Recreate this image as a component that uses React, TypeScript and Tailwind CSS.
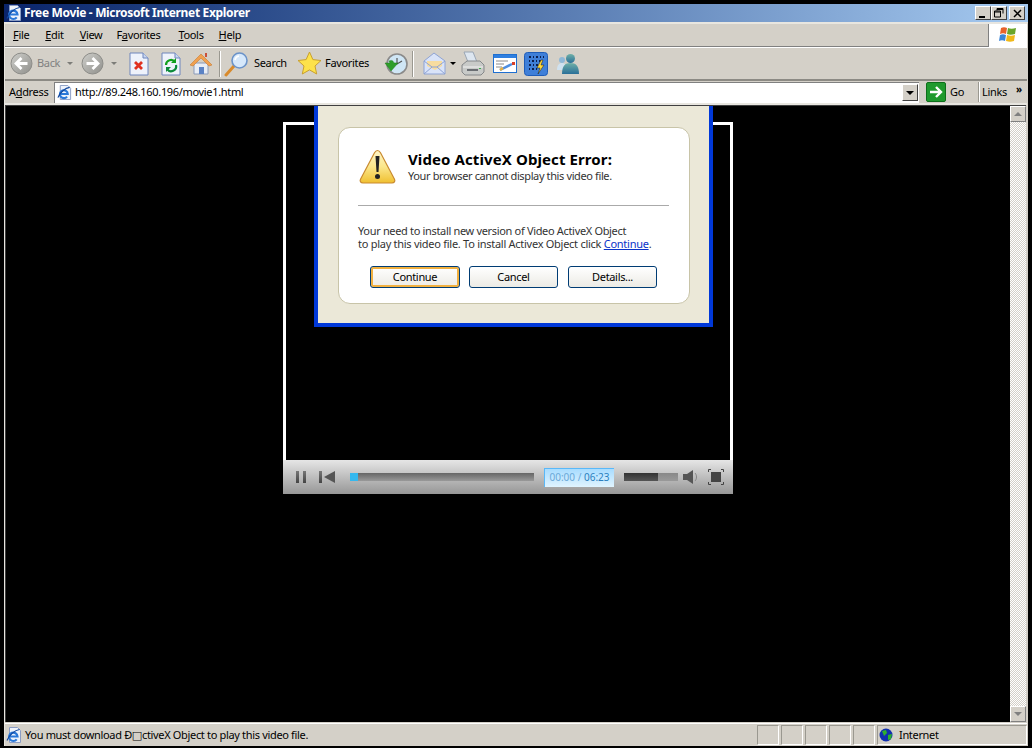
import React from "react";

const ui = "font-['Noto_Sans','DejaVu_Sans',sans-serif] tracking-[-0.33px]";

function Ie({ s = 16 }: { s?: number }) {
  return (
    <svg width={s} height={s} viewBox="0 0 16 16" className="shrink-0">
      <path d="M3.500 .5h8l3 3v12h-11z" fill="#eef3fb" stroke="#8a9cc4" />
      <path d="M3 9.500h8.500a4.200 4.200 0 1 0-.8 2.800" fill="none" stroke="#2a78d8" strokeWidth="2.200" />
      <path d="M1 13.500C3 8 9 3 13.500 2.500" stroke="#12479c" strokeWidth="1.200" fill="none" />
    </svg>
  );
}

function NavCircle({ dir }: { dir: "l" | "r" }) {
  return (
    <svg width="23" height="23" viewBox="0 0 23 23" className="shrink-0">
      <defs>
        <linearGradient id={"nc" + dir} x1="0" y1="0" x2="1" y2="1">
          <stop offset="0" stopColor="#cfcfcb" />
          <stop offset="1" stopColor="#8f8f8b" />
        </linearGradient>
      </defs>
      <circle cx="11.500" cy="11.500" r="10.500" fill={"url(#nc" + dir + ")"} stroke="#8c8c88" />
      {dir === "l" ? (
        <path d="M17.500 11.500H7M11.500 6l-5.500 5.500 5.500 5.500" stroke="#fff" strokeWidth="2.800" fill="none" />
      ) : (
        <path d="M5.500 11.500H16M11.500 6l5.500 5.500-5.500 5.500" stroke="#fff" strokeWidth="2.800" fill="none" />
      )}
    </svg>
  );
}

function Caret({ c = "#7c7c78" }: { c?: string }) {
  return <div className="w-0 h-0 border-x-[3px] border-x-transparent border-t-[3px] shrink-0" style={{ borderTopColor: c }} />;
}

function Page({ kind }: { kind: "stop" | "refresh" }) {
  return (
    <svg width="20" height="24" viewBox="0 0 20 24" className="shrink-0">
      <path d="M1 1h13l5 5v17H1z" fill="#eef2fb" stroke="#6f86bd" />
      <path d="M14 1v5h5" fill="#c9d6ef" stroke="#6f86bd" />
      {kind === "stop" ? (
        <path d="M6 10l7 7M13 10l-7 7" stroke="#e0301e" strokeWidth="2.800" />
      ) : (
        <g fill="none" strokeWidth="2.200">
          <path d="M5 13a5 5 0 0 1 9-3" stroke="#12a01e" />
          <path d="M15 13a5 5 0 0 1-9 4" stroke="#0b8a3a" />
          <path d="M15 6v5h-5z" fill="#12a01e" stroke="none" />
          <path d="M5 20v-5h5z" fill="#0b8a3a" stroke="none" />
        </g>
      )}
    </svg>
  );
}

function Home() {
  return (
    <svg width="24" height="24" viewBox="0 0 24 24" className="shrink-0">
      <path d="M5 11v11h14V11z" fill="#e8edf6" stroke="#8b9ab8" />
      <path d="M1 13L12 2l11 11-3 1-8-8-8 8z" fill="#f0a050" stroke="#c87a30" strokeWidth=".6" />
      <rect x="10" y="15" width="5" height="7" fill="#5b82c4" />
      <rect x="16" y="1" width="2" height="4" fill="#c9503a" />
    </svg>
  );
}

function SearchIcon() {
  return (
    <svg width="25" height="26" viewBox="0 0 25 26" className="shrink-0">
      <path d="M2 24l8-9" stroke="#d98a2b" strokeWidth="3" strokeLinecap="round" />
      <circle cx="15.500" cy="9.500" r="7.500" fill="#d6e8fb" stroke="#6b93c9" strokeWidth="1.600" />
      <path d="M11 9a5 5 0 0 1 4-4" stroke="#fff" strokeWidth="1.500" fill="none" />
    </svg>
  );
}

function Star() {
  return (
    <svg width="25" height="25" viewBox="0 0 25 25" className="shrink-0">
      <path d="M12.500 1l3.400 7.600 8.100.9-6 5.500 1.700 8-7.200-4.100L5.300 23l1.700-8-6-5.500 8.100-.9z" fill="#fde24a" stroke="#c9a030" />
    </svg>
  );
}

function History() {
  return (
    <svg width="24" height="24" viewBox="0 0 24 24" className="shrink-0">
      <circle cx="13" cy="12" r="10" fill="#cfe6f5" stroke="#8a8a8a" strokeWidth="1.600" />
      <path d="M13 6v6l5-3" stroke="#555" strokeWidth="1.200" fill="none" />
      <path d="M1 11l6 8 7-8-4 0C9 8 7 8 5 9L6 11z" fill="#2f9e2a" stroke="#1d7a1b" strokeWidth=".5" />
    </svg>
  );
}

function Mail() {
  return (
    <svg width="23" height="24" viewBox="0 0 23 24" className="shrink-0">
      <path d="M1 9L11 1l11 8v13H1z" fill="#d9e3f8" stroke="#8ea3d4" />
      <path d="M4 9h15v5l-7 4-8-4z" fill="#f7dca0" />
      <path d="M1 22l8-7h5l8 7M1 9l8 6M22 9l-8 6" stroke="#8ea3d4" fill="none" />
    </svg>
  );
}

function Printer() {
  return (
    <svg width="24" height="25" viewBox="0 0 24 25" className="shrink-0">
      <path d="M3 1h9l4 10H7z" fill="#dde6f0" stroke="#9aa6b4" />
      <path d="M1 14l5-4h13l4 4v7l-3 3H4l-3-3z" fill="#c8cac8" stroke="#85888a" />
      <path d="M2 16h20" stroke="#f2f2f2" />
      <path d="M6 19h11" stroke="#6a6e72" strokeWidth="2" />
      <rect x="18" y="17" width="2" height="1" fill="#3bb04a" />
    </svg>
  );
}

function EditIcon() {
  return (
    <svg width="24" height="20" viewBox="0 0 24 20" className="shrink-0">
      <rect x=".5" y=".5" width="23" height="18" fill="#fff" stroke="#1f6fd0" />
      <rect x="1" y="1" width="22" height="3" fill="#2f7fe0" />
      <path d="M3 7h12M3 10h8M3 13h6" stroke="#8a8a8a" />
      <path d="M7 16l12-6" stroke="#4f8fe0" strokeWidth="2.500" />
      <path d="M7 16l3-2" stroke="#e8b040" strokeWidth="2.500" />
      <rect x="19" y="8" width="3" height="3" fill="#d8402a" />
    </svg>
  );
}

function BlueTool() {
  return (
    <svg width="24" height="24" viewBox="0 0 24 24" className="shrink-0">
      <rect x=".5" y=".5" width="23" height="23" rx="3" fill="#3f7fd8" stroke="#1e5cb8" />
      <g fill="#0c1f4f">
        <path d="M5 4h2v2H5zM9 4h1v2H9zM12 4h2v2h-2zM16 4h1v2h-1zM19 4h1v2h-1zM5 8h1v2H5zM8 8h2v2H8zM12 8h1v2h-1zM15 8h2v2h-2zM5 12h2v2H5zM9 12h1v2H9zM12 12h2v2h-2zM5 16h1v2H5zM8 16h2v2H8zM12 16h1v2h-1z" />
      </g>
      <path d="M17 8l-4 8h3l-2 6 6-9h-3l2-5z" fill="#ffd83a" stroke="#1a1a1a" strokeWidth=".5" />
    </svg>
  );
}

function Messenger() {
  return (
    <svg width="24" height="22" viewBox="0 0 24 22" className="shrink-0">
      <defs>
        <linearGradient id="mg" x1="0" y1="0" x2="0" y2="1">
          <stop offset="0" stopColor="#6fb0a8" />
          <stop offset="1" stopColor="#2a6f98" />
        </linearGradient>
      </defs>
      <circle cx="6" cy="7" r="3" fill="#8fb8d8" />
      <path d="M1 17c0-5 2-7 5-7s5 2 5 7z" fill="#d0e2f0" />
      <circle cx="14.500" cy="5.500" r="4.500" fill="url(#mg)" />
      <path d="M6 21c0-8 3-11 8.500-11S23 13 23 21z" fill="url(#mg)" />
    </svg>
  );
}

function Chrome({ children }: { children: React.ReactNode }) {
  return (
    <div className="w-4 h-[14px] bg-[#d4d0c8] border border-t-white border-l-white border-r-[#404040] border-b-[#404040] flex items-center justify-center shrink-0">
      {children}
    </div>
  );
}

function ScrollBtn({ up }: { up: boolean }) {
  return (
    <div className="h-4 bg-[#d4d0c8] border border-t-white border-l-white border-r-[#808080] border-b-[#808080] flex items-center justify-center shrink-0">
      <div
        className={
          up
            ? "w-0 h-0 border-x-[4px] border-x-transparent border-b-[4px] border-b-[#808080]"
            : "w-0 h-0 border-x-[4px] border-x-transparent border-t-[4px] border-t-[#808080]"
        }
      />
    </div>
  );
}

function Menu() {
  const items: [string, string, string, number][] = [
    ["", "F", "ile", 8],
    ["", "E", "dit", 16],
    ["", "V", "iew", 16],
    ["F", "a", "vorites", 14],
    ["", "T", "ools", 18],
    ["", "H", "elp", 15],
  ];
  return (
    <div className="h-[23px] flex items-center bg-[#d4d0c8] border-b border-b-[#808080]">
      {items.map(([a, u, b, ml]) => (
        <span key={u + b} className="text-[11px] text-black" style={{ marginLeft: ml }}>
          {a}
          <span className="underline">{u}</span>
          {b}
        </span>
      ))}
      <div className="ml-auto w-[39px] h-[23px] bg-white border-l border-l-[#808080] flex items-center justify-center">
        <svg width="20" height="18" viewBox="0 0 20 18">
          <path d="M3 2c2-1 4-1 6 0L8 8C6 7 4 7 2 8z" fill="#e8622a" />
          <path d="M10 2c2 1 5 1 8 0l-1 6c-3 1-6 1-8 0z" fill="#6aa52a" />
          <path d="M2 9c2-1 4-1 6 0l-1 6c-2-1-4-1-6 0z" fill="#3a85d8" />
          <path d="M9 9c3 1 5 1 8 0l-1 6c-3 1-5 1-8 0z" fill="#f0b818" />
        </svg>
      </div>
    </div>
  );
}

function Toolbar() {
  return (
    <div className="h-[32px] flex items-center bg-[#d4d0c8] border-t border-t-white pl-[5px] text-[11px] text-black">
      <NavCircle dir="l" />
      <span className="ml-[4px] w-[27px] text-[#808080]">Back</span>
      <div className="ml-[3px]"><Caret /></div>
      <div className="ml-[8px]"><NavCircle dir="r" /></div>
      <div className="ml-[7px]"><Caret /></div>
      <div className="ml-[12px]"><Page kind="stop" /></div>
      <div className="ml-[12px]"><Page kind="refresh" /></div>
      <div className="ml-[8px]"><Home /></div>
      <div className="ml-[6px] w-px h-[26px] bg-[#9a9890] border-r border-r-white box-content" />
      <div className="ml-[3px]"><SearchIcon /></div>
      <span className="ml-[5px] w-[33px]">Search</span>
      <div className="ml-[10px]"><Star /></div>
      <span className="ml-[3px] w-[46px]">Favorites</span>
      <div className="ml-[13px]"><History /></div>
      <div className="ml-[4px] w-px h-[26px] bg-[#9a9890] border-r border-r-white box-content" />
      <div className="ml-[9px]"><Mail /></div>
      <div className="ml-[4px]"><Caret c="#000" /></div>
      <div className="ml-[5px]"><Printer /></div>
      <div className="ml-[8px]"><EditIcon /></div>
      <div className="ml-[7px]"><BlueTool /></div>
      <div className="ml-[8px]"><Messenger /></div>
    </div>
  );
}

function AddressBar() {
  return (
    <div className="h-[26px] flex items-center bg-[#d4d0c8] border-t-2 border-b-2 border-t-[#8c8a84] border-b-[#e8e6e0] text-[11px] text-black">
      <span className="ml-[4px] w-[45px]">
        A<span className="underline">d</span>dress
      </span>
      <div className="w-[865px] h-[21px] bg-white border-t border-l border-t-[#808080] border-l-[#808080] flex items-center pl-[2px] pr-px">
        <Ie s={15} />
        <span className="ml-[3px]">http://89.248.160.196/movie1.html</span>
        <div className="ml-auto w-4 h-[17px] bg-[#d4d0c8] border border-t-white border-l-white border-r-[#404040] border-b-[#404040] flex items-center justify-center">
          <div className="w-0 h-0 border-x-[4px] border-x-transparent border-t-[4px] border-t-black" />
        </div>
      </div>
      <div className="ml-[7px] w-5 h-5 rounded-[2px] bg-[#1f9a2e] border border-[#0d6f1b] flex items-center justify-center shrink-0">
        <svg width="14" height="14" viewBox="0 0 14 14">
          <path d="M1 7h10M7 2l5 5-5 5" stroke="#fff" strokeWidth="2.400" fill="none" />
        </svg>
      </div>
      <span className="ml-[4px] w-[28px]">Go</span>
      <div className="w-px h-[20px] bg-[#9a9890] border-r border-r-white box-content" />
      <span className="ml-[2px]">Links</span>
      <span className="ml-[9px] -mt-[7px] font-bold text-[10px] leading-none">»</span>
    </div>
  );
}

function DialogBtn({ label, focus }: { label: string; focus?: boolean }) {
  return (
    <div
      className={
        "h-[22px] rounded-[3px] border border-[#003c74] bg-gradient-to-b from-white to-[#ecebe5] flex items-center justify-center text-[11px] text-black " +
        (focus ? "w-[90px] shadow-[inset_0_0_0_2px_#f0b040]" : "w-[89px]")
      }
    >
      {label}
    </div>
  );
}

function Warning() {
  return (
    <svg width="37" height="36" viewBox="0 0 37 36" className="shrink-0">
      <defs>
        <linearGradient id="wg" x1="0" y1="0" x2="0" y2="1">
          <stop offset="0" stopColor="#fff6c8" />
          <stop offset="0.5" stopColor="#fbe68a" />
          <stop offset="1" stopColor="#f0c030" />
        </linearGradient>
      </defs>
      <path d="M18.500 1.500c1.500 0 2.300 1 3 2.300l14 26.500c1 2.200-.3 3.700-2.500 3.700H4c-2.200 0-3.500-1.500-2.500-3.700l14-26.500c.7-1.300 1.500-2.300 3-2.300z" fill="url(#wg)" stroke="#c98a30" strokeWidth="1.200" />
      <path d="M16.500 7h4l-1 16h-2z" fill="#222" />
      <circle cx="18.500" cy="27.500" r="2.500" fill="#222" />
    </svg>
  );
}

function Dialog() {
  return (
    <div className="absolute left-[31px] top-[-16px] w-[399px] h-[221px] bg-[#ebe8d8] border-4 border-t-0 border-[#0038d8] pl-[20px] pt-[21px]">
      <div className="w-[352px] h-[177px] bg-white rounded-[12px] border border-[#c8c4a8] px-[19px] pt-[21px] text-[#333]">
        <div className="flex items-start h-[57px] border-b border-b-[#aaa] mr-px">
          <div className="ml-[1px]"><Warning /></div>
          <div className="ml-[12px]">
            <div className="text-[15px] font-bold leading-[20px] text-black whitespace-nowrap tracking-[0.1px]">Video ActiveX Object Error:</div>
            <div className="text-[11px] leading-[13px] whitespace-nowrap tracking-[-0.38px]">Your browser cannot display this video file.</div>
          </div>
        </div>
        <div className="mt-[18px] text-[11px] leading-[13px] whitespace-nowrap">
          <div>Your need to install new version of Video ActiveX Object</div>
          <div className="tracking-[-0.27px]">
            to play this video file. To install Activex Object click{" "}
            <span className="text-[#0a33c8] underline">Continue</span>.
          </div>
        </div>
        <div className="mt-[16px] ml-[12px] flex gap-[9px]">
          <DialogBtn label="Continue" focus />
          <DialogBtn label="Cancel" />
          <div className="ml-px"><DialogBtn label="Details..." /></div>
        </div>
      </div>
    </div>
  );
}

function Controls() {
  return (
    <div className="h-[34px] flex items-center bg-gradient-to-b from-[#e6e6e6] to-[#979797] pl-[13px]">
      <div className="flex gap-[4px]">
        <div className="w-[3px] h-[12px] bg-gradient-to-b from-[#777] to-[#444]" />
        <div className="w-[3px] h-[12px] bg-gradient-to-b from-[#777] to-[#444]" />
      </div>
      <div className="ml-[13px] w-[3px] h-[12px] bg-gradient-to-b from-[#777] to-[#444]" />
      <div className="ml-[2px] w-0 h-0 border-y-[6px] border-y-transparent border-r-[11px] border-r-[#555]" />
      <div className="ml-[15px] w-[184px] h-[8px] bg-gradient-to-b from-[#666] to-[#999] flex">
        <div className="w-[8px] h-[8px] bg-[#35b8ee]" />
      </div>
      <div className="ml-[10px] w-[70px] h-[19px] bg-gradient-to-b from-[#a8dcff] to-[#e0f4ff] border-t border-l border-t-[#5ab8f8] border-l-[#5ab8f8] flex items-center justify-center text-[10px] tracking-normal whitespace-nowrap">
        <span className="text-[#6aa8d8]">00:00&nbsp;/&nbsp;</span>
        <span className="text-[#2a7fc0]">06:23</span>
      </div>
      <div className="ml-[10px] w-[54px] h-[8px] bg-gradient-to-b from-[#888] to-[#999]">
        <div className="w-[34px] h-[8px] bg-gradient-to-b from-[#333] to-[#555]" />
      </div>
      <svg width="16" height="16" viewBox="0 0 16 16" className="ml-[5px] shrink-0">
        <path d="M0 5h4l6-4v14l-6-4H0z" fill="#555" />
        <path d="M12 4c2 2 2 6 0 8" stroke="#888" fill="none" />
      </svg>
      <svg width="16" height="16" viewBox="0 0 16 16" className="ml-[9px] shrink-0">
        <path d="M.5 3V.5H3M13 .5h2.500V3M15.500 13v2.500H13M3 15.500H.5V13" stroke="#444" fill="none" />
        <rect x="3" y="3" width="10" height="10" fill="#444" />
      </svg>
    </div>
  );
}

function Content() {
  return (
    <div className="flex-1 flex min-h-0 border-t border-l border-t-[#404040] border-l-[#404040] bg-black mr-px">
      <div className="flex-1 flex justify-center pt-[16px] overflow-hidden">
        <div className="relative w-[450px] h-[372px] flex flex-col">
          <div className="h-[338px] border-[3px] border-b-0 border-white bg-black" />
          <Controls />
          <Dialog />
        </div>
      </div>
      <div className="w-4 flex flex-col bg-[repeating-conic-gradient(#d4d0c8_0%_25%,#ffffff_0%_50%)] bg-[length:2px_2px]">
        <ScrollBtn up />
        <div className="flex-1" />
        <ScrollBtn up={false} />
      </div>
    </div>
  );
}

function Status() {
  return (
    <div className="h-[23px] mt-[1px] flex items-center gap-[2px] bg-[#d4d0c8] border-t border-t-white text-[11px] text-black">
      <div className="flex-1 flex items-center min-w-0 pl-[1px]">
        <Ie s={16} />
        <span className="ml-[3px] whitespace-nowrap">You must download Ð□ctiveX Object to play this video file.</span>
      </div>
      {[0, 1, 2, 3, 4].map((i) => (
        <div key={i} className="w-[22px] h-[20px] border border-t-[#9a9890] border-l-[#9a9890] border-r-white border-b-white" />
      ))}
      <div className="w-[150px] h-[20px] flex items-center border border-t-[#9a9890] border-l-[#9a9890] border-r-white border-b-white pl-[1px]">
        <svg width="14" height="14" viewBox="0 0 14 14">
          <circle cx="7" cy="7" r="6.500" fill="#1030b0" />
          <path d="M3 3l4-1 1 3-3 3zM9 7l4-1-1 5-3 1z" fill="#2fb030" />
        </svg>
        <span className="ml-[6px]">Internet</span>
      </div>
    </div>
  );
}

export default function App() {
  return (
    <div className={"w-[1032px] h-[748px] bg-black pt-[4px] pl-[4px] pr-[4px] pb-[2px] flex flex-col overflow-hidden " + ui}>
      <div className="h-[18px] flex items-center bg-gradient-to-r from-[#0a246a] to-[#a6caf0] shrink-0 pl-[2px] pr-[3px]">
        <Ie s={16} />
        <span className="ml-[2px] text-[12px] font-bold text-white leading-none">Free Movie - Microsoft Internet Explorer</span>
        <div className="ml-auto flex items-center">
          <Chrome>
            <div className="w-[6px] h-[2px] bg-black mt-[7px] -ml-[2px]" />
          </Chrome>
          <Chrome>
            <svg width="10" height="10" viewBox="0 0 10 10">
              <path d="M3 .5h6v5M3 1.500h6M3 .5v2M.5 3h6v6h-6zM.5 4h6" stroke="#000" fill="none" />
            </svg>
          </Chrome>
          <div className="w-[2px]" />
          <Chrome>
            <svg width="9" height="9" viewBox="0 0 9 9">
              <path d="M1 1l7 7M8 1L1 8" stroke="#000" strokeWidth="1.500" />
            </svg>
          </Chrome>
        </div>
      </div>
      <div className="flex-1 flex flex-col min-h-0 bg-[#d4d0c8] border-t-2 border-l border-r border-t-[#e8e6e0] border-l-[#e8e6e0] border-r-[#d4d0c8]">
        <Menu />
        <Toolbar />
        <AddressBar />
        <Content />
        <Status />
      </div>
    </div>
  );
}
